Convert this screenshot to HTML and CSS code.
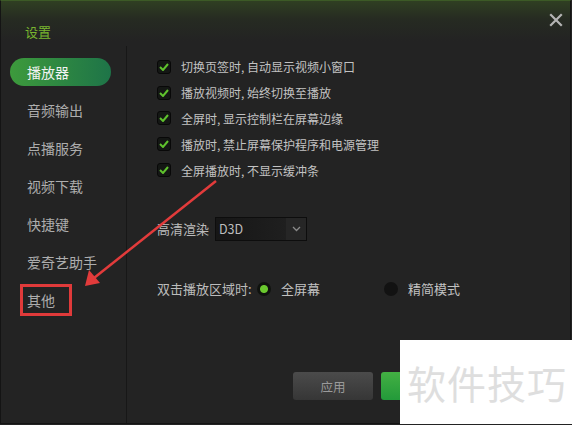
FILE: index.html
```html
<!DOCTYPE html>
<html lang="zh-CN">
<head>
  <meta charset="UTF-8" />
  <title>设置</title>
  <link rel="stylesheet" href="styles.css">
</head>
<body>
  <div class="dialog">
    <header class="titlebar">
      <div class="title">设置</div>
      <div class="close">
        <svg width="14" height="14" viewBox="0 0 14 14"><path d="M2 2 L12 12 M12 2 L2 12" stroke="#b4b4b4" stroke-width="2.2" stroke-linecap="square"/></svg>
      </div>
    </header>

    <div class="body">
      <ul class="sidebar">
        <li class="active">播放器</li>
        <li>音频输出</li>
        <li>点播服务</li>
        <li>视频下载</li>
        <li>快捷键</li>
        <li>爱奇艺助手</li>
        <li class="marked">其他</li>
      </ul>

      <section class="main">
        <div class="checks">
          <label class="check"><span class="box"><svg width="10" height="8" viewBox="0 0 10 8"><path d="M1 4 L4 7 L9 1" fill="none" stroke="#5fc22d" stroke-width="2"/></svg></span>切换页签时, 自动显示视频小窗口</label>
          <label class="check"><span class="box"><svg width="10" height="8" viewBox="0 0 10 8"><path d="M1 4 L4 7 L9 1" fill="none" stroke="#5fc22d" stroke-width="2"/></svg></span>播放视频时, 始终切换至播放</label>
          <label class="check"><span class="box"><svg width="10" height="8" viewBox="0 0 10 8"><path d="M1 4 L4 7 L9 1" fill="none" stroke="#5fc22d" stroke-width="2"/></svg></span>全屏时, 显示控制栏在屏幕边缘</label>
          <label class="check"><span class="box"><svg width="10" height="8" viewBox="0 0 10 8"><path d="M1 4 L4 7 L9 1" fill="none" stroke="#5fc22d" stroke-width="2"/></svg></span>播放时, 禁止屏幕保护程序和电源管理</label>
          <label class="check"><span class="box"><svg width="10" height="8" viewBox="0 0 10 8"><path d="M1 4 L4 7 L9 1" fill="none" stroke="#5fc22d" stroke-width="2"/></svg></span>全屏播放时, 不显示缓冲条</label>
        </div>

        <div class="render">
          <span class="label">高清渲染</span>
          <div class="select">
            <span class="value">D3D</span>
            <span class="drop"><svg width="9" height="6" viewBox="0 0 9 6"><path d="M1 1 L4.5 4.5 L8 1" fill="none" stroke="#8a8a8a" stroke-width="1.3"/></svg></span>
          </div>
        </div>

        <div class="radios">
          <span class="label wide">双击播放区域时:</span>
          <span class="radio on"></span>
          <span class="opt">全屏幕</span>
          <span class="radio"></span>
          <span class="opt">精简模式</span>
        </div>

        <div class="buttons">
          <button class="btn">应用</button>
          <button class="btn primary"></button>
        </div>
      </section>
    </div>

    <div class="mark-box"></div>
    <svg class="arrow" width="572" height="425" viewBox="0 0 572 425">
      <line x1="216" y1="181" x2="94" y2="278" stroke="#e23b3b" stroke-width="2.5"/>
      <path d="M85 286 L89 270 L100 283 Z" fill="#e23b3b"/>
    </svg>
    <div class="watermark">软件技巧</div>
  </div>
</body>
</html>
```

FILE: styles.css
```css
* {
  margin: 0;
  padding: 0;
  box-sizing: border-box;
}

body {
  background: #232323;
  font-family: "Noto Sans CJK SC", "Noto Sans", sans-serif;
  overflow: hidden;
}

.dialog {
  position: relative;
  width: 571px;
  height: 424px;
  background: linear-gradient(180deg, #2f3f22 0px, #262b22 18px, #232323 40px);
  border: 1px solid #141414;
  border-top-color: #3c5a26;
  display: flex;
  flex-direction: column;
}

.titlebar {
  height: 45px;
  display: flex;
  justify-content: space-between;
  padding-left: 24px;
}

.title {
  margin-top: 22px;
  font-size: 13px;
  line-height: 18px;
  color: #79b52f;
}

.close {
  margin-top: 7px;
  margin-right: 7px;
}

.body {
  flex: 1;
  display: flex;
}

.sidebar {
  list-style: none;
  width: 126px;
  border-right: 1px solid #171717;
  padding-top: 12px;
  display: flex;
  flex-direction: column;
  gap: 10px;
}

.sidebar li {
  position: relative;
  margin-left: 9px;
  width: 101px;
  height: 28px;
  line-height: 28px;
  padding-left: 17px;
  font-size: 14px;
  color: #adadad;
  border-radius: 14px;
}

.sidebar li.active {
  background: linear-gradient(90deg, #3d9a3c, #1e7448);
  color: #f2f2f2;
}

/* red annotation box around the last item */
.sidebar li.marked::after {
  content: "";
  position: absolute;
  left: 10px;
  top: -2px;
  width: 52px;
  height: 32px;
  box-sizing: border-box;
  border: 3px solid #e03a3a;
}

.main {
  flex: 1;
  padding-left: 30px;
  display: flex;
  flex-direction: column;
}

.checks {
  margin-top: 8px;
  display: flex;
  flex-direction: column;
}

.check {
  height: 25.8px;
  display: flex;
  align-items: center;
  gap: 10px;
  font-size: 12px;
  color: #c2c2c2;
}

.box {
  width: 14px;
  height: 14px;
  border: 1px solid #080808;
  border-radius: 3px;
  background: #141714;
  display: flex;
  align-items: center;
  justify-content: center;
}

.render {
  margin-top: 34px;
  display: flex;
  align-items: center;
  gap: 6px;
  height: 24px;
}

.label {
  font-size: 13px;
  color: #bcbcbc;
  white-space: nowrap;
}

.label.wide {
  width: 100px;
}

.select {
  width: 92px;
  height: 24px;
  display: flex;
  border: 1px solid #0d0d0d;
  background: #181818;
}

.value {
  flex: 1;
  padding-left: 3px;
  font-size: 12.5px;
  line-height: 22px;
  color: #bdbdbd;
  background: linear-gradient(90deg, #161616, #1f1f1f);
}

.drop {
  width: 20px;
  background: #262626;
  display: flex;
  align-items: center;
  justify-content: center;
}

.radios {
  margin-top: 38px;
  height: 20px;
  display: flex;
  align-items: center;
}

.radio {
  width: 14px;
  height: 14px;
  border-radius: 50%;
  background: #121212;
  margin-right: 10px;
}

.radio.on {
  background: radial-gradient(circle, #6ac82e 0 3.5px, #0f120e 4.5px);
}

.opt {
  font-size: 13px;
  color: #c2c2c2;
  width: 103px;
  white-space: nowrap;
}

.buttons {
  margin-top: auto;
  margin-bottom: 23px;
  margin-left: 136px;
  display: flex;
  gap: 8px;
}

.btn {
  width: 80px;
  height: 28px;
  border: none;
  border-radius: 3px;
  font-family: "Noto Sans CJK SC", sans-serif;
  font-size: 12.5px;
  color: #9a9a9a;
  background: linear-gradient(180deg, #4b4b4b, #363636);
}

.btn.primary {
  background: linear-gradient(180deg, #43b043, #239a3a);
}

.mark-box {
  position: absolute;
  left: 399px;
  top: 339px;
  width: 173px;
  height: 86px;
  background: #fff;
}

.watermark {
  position: absolute;
  left: 406px;
  top: 356px;
  font-size: 39px;
  line-height: 50px;
  color: #dedede;
  letter-spacing: 1px;
}

.arrow {
  position: absolute;
  left: -1px;
  top: -1px;
  pointer-events: none;
}
```
